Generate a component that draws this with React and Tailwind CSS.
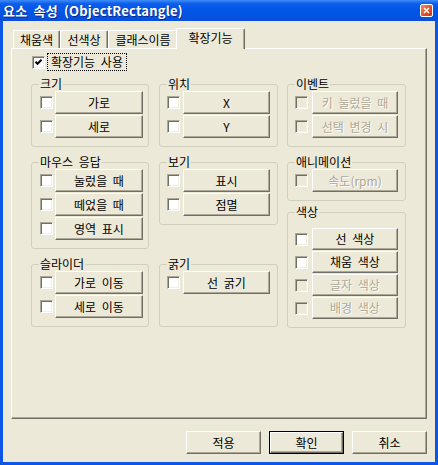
import React from 'react';

const tabs = [
  { label: '채움색', w: 'w-[47px]' },
  { label: '선색상', w: 'w-[48px]' },
  { label: '클래스이름', w: 'w-[70px]' },
];

// per-column metrics: padding before checkbox, gap to button, button width
const cols = {
  a: { pad: 'pl-[8px]', gap: 'gap-[2px]', bw: 'w-[88px]' },
  b: { pad: 'pl-[7px]', gap: 'gap-[3px]', bw: 'w-[87px]' },
  c: { pad: 'pl-[7px]', gap: 'gap-[4px]', bw: 'w-[86px]' },
};

function Check({ checked, disabled }) {
  return (
    <span
      className={`flex h-[13px] w-[13px] shrink-0 items-center justify-center border border-t-[#aca899] border-l-[#aca899] border-r-white border-b-white shadow-[inset_1px_1px_0_#716f64,inset_-1px_-1px_0_#f1efe2] ${
        disabled ? 'bg-[#ece9d8]' : 'bg-white'
      }`}
    >
      {checked && (
        <svg width="9" height="9" viewBox="0 0 9 9">
          <polyline points="1.5,3.8 3.5,5.8 7.5,1.8" fill="none" stroke="#000" strokeWidth="2" />
        </svg>
      )}
    </span>
  );
}

function Btn({ children, disabled, w = 'w-[75px]', h = 'h-[23px]', isDefault }) {
  const face = (
    <span
      className={`flex h-full w-full items-center justify-center border border-t-white border-l-white border-r-[#716f64] border-b-[#716f64] bg-[#ece9d8] shadow-[inset_-1px_-1px_0_#aca899] ${
        disabled ? 'text-[#aca899] [text-shadow:1px_1px_0_#fff]' : 'text-black'
      }`}
    >
      {children}
    </span>
  );
  if (isDefault) {
    return <span className={`flex border border-black ${w} ${h}`}>{face}</span>;
  }
  return <span className={`flex ${w} ${h}`}>{face}</span>;
}

function Row({ col, label, disabled, h }) {
  const c = cols[col];
  return (
    <div className={`flex items-center ${c.pad} ${c.gap}`}>
      <Check disabled={disabled} />
      <Btn w={c.bw} h={h} disabled={disabled}>
        {label}
      </Btn>
    </div>
  );
}

function Group({ title, className = '', children }) {
  return (
    <fieldset className={`flex flex-col rounded-[3px] border border-[#d0d0bf] pb-[8px] ${className}`}>
      <legend className="ml-[7px] px-[1px] text-[12px] leading-[14px]">{title}</legend>
      <div className="flex flex-col gap-[1px]">{children}</div>
    </fieldset>
  );
}

export default function App() {
  return (
    <div className="flex h-[465px] w-[438px] flex-col bg-[#0d55e5] font-['Noto_Sans_CJK_KR','Noto_Sans',sans-serif] text-[12px] leading-[14px] text-black [word-spacing:3px]">
      {/* title bar */}
      <div className="flex h-[21px] shrink-0 items-center justify-between bg-[linear-gradient(180deg,#3d8df8_0%,#0d5ceb_18%,#0055e5_55%,#0a4fdc_100%)] pl-[3px] pr-[5px]">
        <span className="text-[13px] font-bold tracking-[0.2px] text-white [text-shadow:1px_1px_0_#0a2a8c]">
          요소 속성 (ObjectRectangle)
        </span>
        <span className="flex h-[13px] w-[13px] items-center justify-center rounded-[2px] border border-white bg-[linear-gradient(135deg,#f08a64_0%,#e2502a_55%,#c73a18_100%)]">
          <svg width="7" height="7" viewBox="0 0 7 7">
            <path d="M1 1L6 6M6 1L1 6" stroke="#fff" strokeWidth="1.6" />
          </svg>
        </span>
      </div>

      {/* client area */}
      <div className="mx-[3px] mb-[3px] flex flex-1 flex-col bg-[#ece9d8] pl-[8px] pt-[7px]">
        {/* tabs */}
        <div className="ml-[2px] flex h-[20px] items-end">
          {tabs.map((t) => (
            <div
              key={t.label}
              className={`flex h-[18px] items-center justify-center rounded-t-[2px] border-l border-t border-r border-l-white border-t-white border-r-[#716f64] shadow-[inset_-1px_0_0_#aca899] ${t.w}`}
            >
              {t.label}
            </div>
          ))}
          <div className="relative z-10 -mb-[1px] -ml-[2px] flex h-[21px] w-[69px] justify-center rounded-t-[2px] border-l border-t border-r border-l-white border-t-white border-r-[#716f64] bg-[#ece9d8] pt-[2px] shadow-[inset_-1px_0_0_#aca899]">
            확장기능
          </div>
        </div>

        {/* tab panel */}
        <div className="flex h-[371px] w-[416px] flex-col border border-t-white border-l-white border-r-[#716f64] border-b-[#716f64] pl-[19px] pt-[4px] shadow-[inset_-1px_-1px_0_#aca899]">
          <div className="flex h-[18px] items-center pl-[1px]">
            <Check checked />
            <span className="ml-[2px] border border-dotted border-black px-[3px] leading-[16px]">확장기능 사용</span>
          </div>

          <div className="mt-[6px] flex h-[250px]">
            <div className="flex w-[118px] flex-col">
              <Group title="크기">
                <Row col="a" label="가로" />
                <Row col="a" label="세로" />
              </Group>
              <Group title="마우스 응답" className="mt-[8px]">
                <Row col="a" label="눌렀을 때" />
                <Row col="a" label="떼었을 때" />
                <Row col="a" label="영역 표시" />
              </Group>
              <Group title="슬라이더" className="mt-[8px]">
                <Row col="a" label="가로 이동" />
                <Row col="a" label="세로 이동" />
              </Group>
            </div>

            <div className="ml-[10px] flex w-[119px] flex-col">
              <Group title="위치">
                <Row col="b" label="X" />
                <Row col="b" label="Y" />
              </Group>
              <Group title="보기" className="mt-[8px]">
                <Row col="b" label="표시" />
                <Row col="b" label="점멸" />
              </Group>
              <Group title="굵기" className="mt-[32px] flex-1">
                <Row col="b" label="선 굵기" />
              </Group>
            </div>

            <div className="ml-[9px] flex w-[119px] flex-col">
              <Group title="이벤트">
                <Row col="c" label="키 눌렀을 때" disabled />
                <Row col="c" label="선택 변경 시" disabled />
              </Group>
              <Group title="애니메이션" className="mt-[8px]">
                <Row col="c" label="속도(rpm)" disabled />
              </Group>
              <Group title="색상" className="mt-[4px] flex-1">
                <div className="flex flex-col gap-[1px] pt-[9px]">
                  <Row col="c" label="선 색상" h="h-[22px]" />
                  <Row col="c" label="채움 색상" h="h-[22px]" />
                  <Row col="c" label="글자 색상" h="h-[22px]" disabled />
                  <Row col="c" label="배경 색상" h="h-[22px]" disabled />
                </div>
              </Group>
            </div>
          </div>
        </div>

        {/* dialog buttons */}
        <div className="mt-[12px] flex w-[416px] justify-end gap-[8px]">
          <Btn>적용</Btn>
          <Btn isDefault>확인</Btn>
          <Btn>취소</Btn>
        </div>
      </div>
    </div>
  );
}
